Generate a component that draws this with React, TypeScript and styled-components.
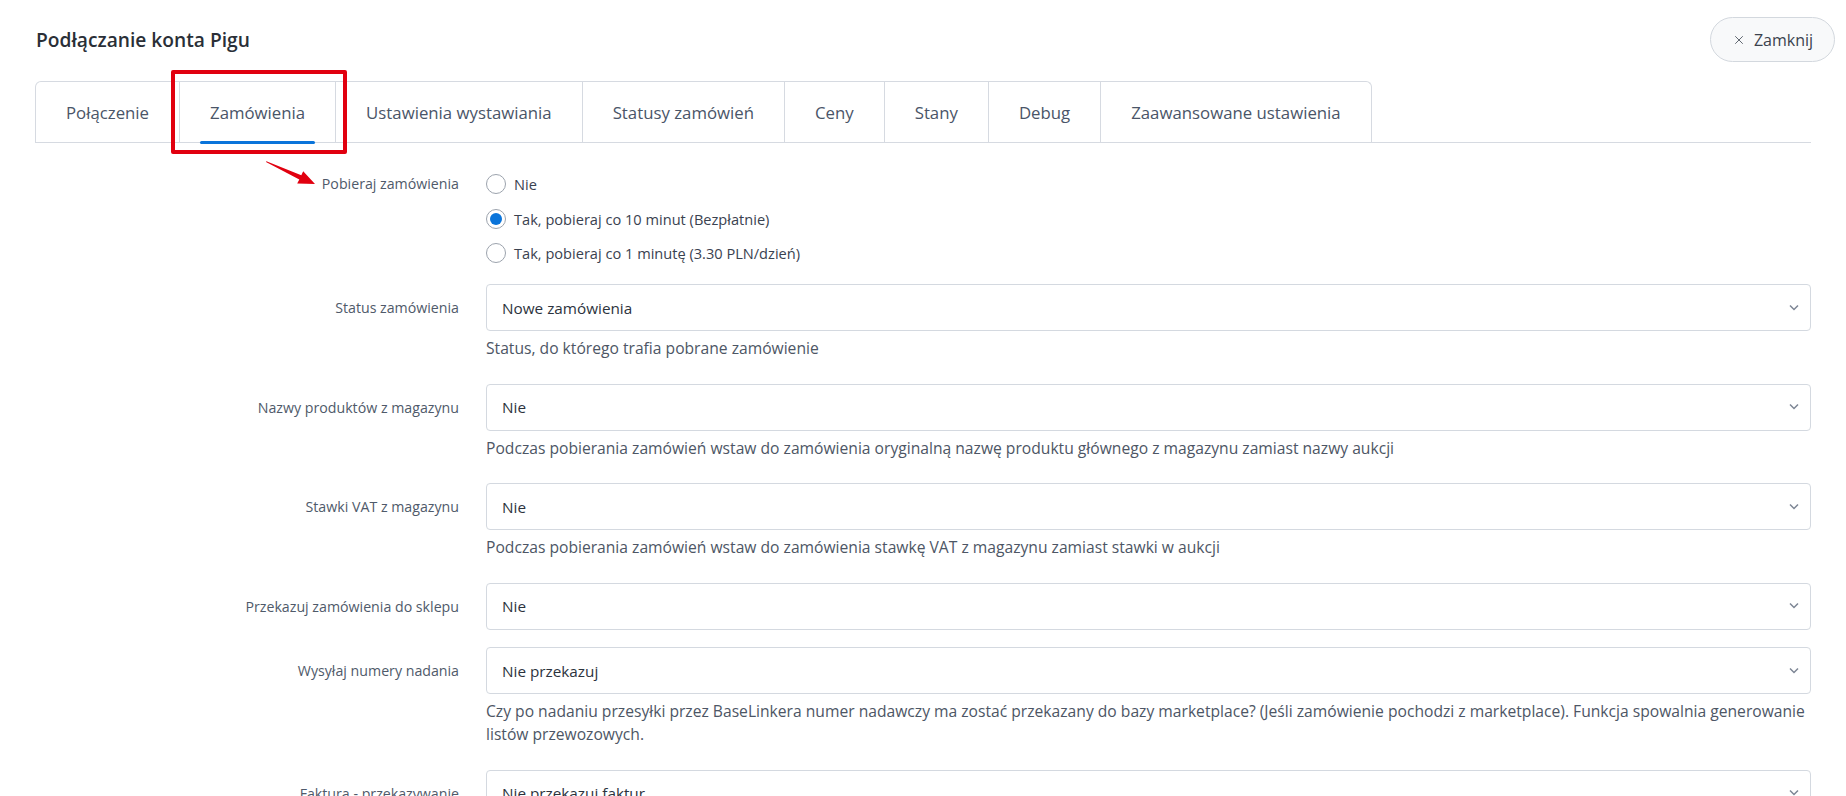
import styled, { createGlobalStyle } from "styled-components";
import { X } from "lucide-react";

const GlobalStyle = createGlobalStyle`
  html, body {
    margin: 0;
    padding: 0;
    background: #ffffff;
  }
  body {
    font-family: "Open Sans", "Noto Sans", Arial, sans-serif;
    color: #2f3641;
  }
  * { box-sizing: border-box; }
`;

const Modal = styled.div`
  position: relative;
  width: 1846px;
  height: 796px;
  overflow: hidden;
  background: #fff;
`;

const Header = styled.div`
  display: flex;
  align-items: center;
  justify-content: space-between;
  height: 45px;
  margin-top: 17px;
  padding: 0 11px 0 36px;
`;

const Title = styled.h1`
  margin: 0;
  font-size: 19.2px;
  font-weight: 600;
  color: #2a2f37;
`;

const CloseButton = styled.button`
  display: flex;
  align-items: center;
  justify-content: center;
  gap: 8px;
  width: 125px;
  height: 45px;
  border: 1px solid #d3d8de;
  border-radius: 23px;
  background: #f8f9fa;
  color: #3b424d;
  font-family: "Open Sans", Arial, sans-serif;
  font-size: 16px;
  cursor: pointer;
  svg { color: #555c66; }
`;

const Body = styled.div`
  padding: 0 35px;
`;

const TabBar = styled.div`
  display: flex;
  margin-top: 19px;
  border-bottom: 1px solid #d6dae1;
`;

const Tab = styled.div<{ $first?: boolean; $last?: boolean }>`
  position: relative;
  display: flex;
  align-items: center;
  justify-content: center;
  height: 61px;
  padding: 0 30px;
  border-top: 1px solid #d6dae1;
  border-right: 1px solid #d6dae1;
  border-left: ${(p) => (p.$first ? "1px solid #d6dae1" : "none")};
  border-top-left-radius: ${(p) => (p.$first ? "6px" : "0")};
  border-top-right-radius: ${(p) => (p.$last ? "6px" : "0")};
  font-size: 16.8px;
  color: #4a5568;
  white-space: nowrap;
  cursor: pointer;
`;

const ActiveBar = styled.span`
  position: absolute;
  left: 20px;
  right: 20px;
  bottom: -2px;
  height: 3px;
  border-radius: 2px;
  background: #0a74da;
`;

const Highlight = styled.span`
  position: absolute;
  left: -9px;
  top: -12px;
  right: -12px;
  bottom: -12px;
  border: 4px solid #e1000f;
  border-radius: 2px;
  pointer-events: none;
  z-index: 2;
`;

const Form = styled.div`
  padding-top: 24px;
`;

const Row = styled.div<{ $gap?: number }>`
  display: grid;
  grid-template-columns: 424px 1fr;
  column-gap: 27px;
  margin-bottom: ${(p) => (p.$gap ?? 17.5)}px;
`;

const Label = styled.div<{ $h: number }>`
  text-align: right;
  font-size: 14.2px;
  line-height: ${(p) => p.$h}px;
  color: #4f5a6a;
  white-space: nowrap;
`;

const RadioGroup = styled.div`
  display: flex;
  flex-direction: column;
`;

const RadioOption = styled.label`
  display: flex;
  align-items: center;
  gap: 8px;
  height: 34.5px;
  font-size: 14.6px;
  color: #3a4250;
  cursor: pointer;
`;

const RadioCircle = styled.span<{ $checked?: boolean }>`
  position: relative;
  width: 20px;
  height: 20px;
  flex: none;
  border-radius: 50%;
  border: 1px solid #9ca3ad;
  background: #fff;
  &::after {
    content: "";
    position: absolute;
    inset: 3px;
    border-radius: 50%;
    background: ${(p) => (p.$checked ? "#0a74da" : "transparent")};
  }
`;

const Select = styled.div`
  position: relative;
  display: flex;
  align-items: center;
  height: 47px;
  padding: 0 40px 0 15px;
  border: 1px solid #d4d9e0;
  border-radius: 4px;
  font-size: 15.3px;
  color: #2c333d;
  background: #fff;
`;

const Chevron = styled.svg`
  position: absolute;
  right: 11px;
  top: 50%;
  margin-top: -4px;
`;

const Help = styled.div`
  margin: 6px 0 6px;
  font-size: 15.65px;
  line-height: 23px;
  color: #4d5665;
`;

const Arrow = styled.svg`
  position: absolute;
  left: 262px;
  top: 158px;
  pointer-events: none;
`;

type Field = { label: string; value: string; help?: string };

const tabs = [
  "Połączenie",
  "Zamówienia",
  "Ustawienia wystawiania",
  "Statusy zamówień",
  "Ceny",
  "Stany",
  "Debug",
  "Zaawansowane ustawienia",
];

const fields: Field[] = [
  { label: "Status zamówienia", value: "Nowe zamówienia", help: "Status, do którego trafia pobrane zamówienie" },
  {
    label: "Nazwy produktów z magazynu",
    value: "Nie",
    help: "Podczas pobierania zamówień wstaw do zamówienia oryginalną nazwę produktu głównego z magazynu zamiast nazwy aukcji",
  },
  {
    label: "Stawki VAT z magazynu",
    value: "Nie",
    help: "Podczas pobierania zamówień wstaw do zamówienia stawkę VAT z magazynu zamiast stawki w aukcji",
  },
  { label: "Przekazuj zamówienia do sklepu", value: "Nie" },
  {
    label: "Wysyłaj numery nadania",
    value: "Nie przekazuj",
    help: "Czy po nadaniu przesyłki przez BaseLinkera numer nadawczy ma zostać przekazany do bazy marketplace? (Jeśli zamówienie pochodzi z marketplace). Funkcja spowalnia generowanie listów przewozowych.",
  },
  { label: "Faktura - przekazywanie", value: "Nie przekazuj faktur" },
];

const radios = [
  { text: "Nie", checked: false },
  { text: "Tak, pobieraj co 10 minut (Bezpłatnie)", checked: true },
  { text: "Tak, pobieraj co 1 minutę (3.30 PLN/dzień)", checked: false },
];

export default function App() {
  return (
    <>
      <GlobalStyle />
      <Modal>
        <Header>
          <Title>Podłączanie konta Pigu</Title>
          <CloseButton>
            <X size={14} strokeWidth={1.6} />
            Zamknij
          </CloseButton>
        </Header>
        <Body>
          <TabBar>
            {tabs.map((t, i) => (
              <Tab key={t} $first={i === 0} $last={i === tabs.length - 1}>
                {t}
                {i === 1 && (
                  <>
                    <ActiveBar />
                    <Highlight />
                  </>
                )}
              </Tab>
            ))}
          </TabBar>
          <Form>
            <Row $gap={13.5}>
              <Label $h={34.5}>Pobieraj zamówienia</Label>
              <RadioGroup>
                {radios.map((r) => (
                  <RadioOption key={r.text}>
                    <RadioCircle $checked={r.checked} />
                    {r.text}
                  </RadioOption>
                ))}
              </RadioGroup>
            </Row>
            {fields.map((f) => (
              <Row key={f.label}>
                <Label $h={47}>{f.label}</Label>
                <div>
                  <Select>
                    {f.value}
                    <Chevron width="10" height="7" viewBox="0 0 10 7">
                      <path d="M1 1.5 L5 5.5 L9 1.5" fill="none" stroke="#7d8695" strokeWidth="1.5" />
                    </Chevron>
                  </Select>
                  {f.help && <Help>{f.help}</Help>}
                </div>
              </Row>
            ))}
          </Form>
        </Body>
        <Arrow width="56" height="30" viewBox="0 0 56 30">
          <polygon
            points="4,4 37.3,21.6 35.2,25.6 53,26 41.2,13.2 39.3,17.2 4.4,3.2"
            fill="#e1000f"
          />
        </Arrow>
      </Modal>
    </>
  );
}
